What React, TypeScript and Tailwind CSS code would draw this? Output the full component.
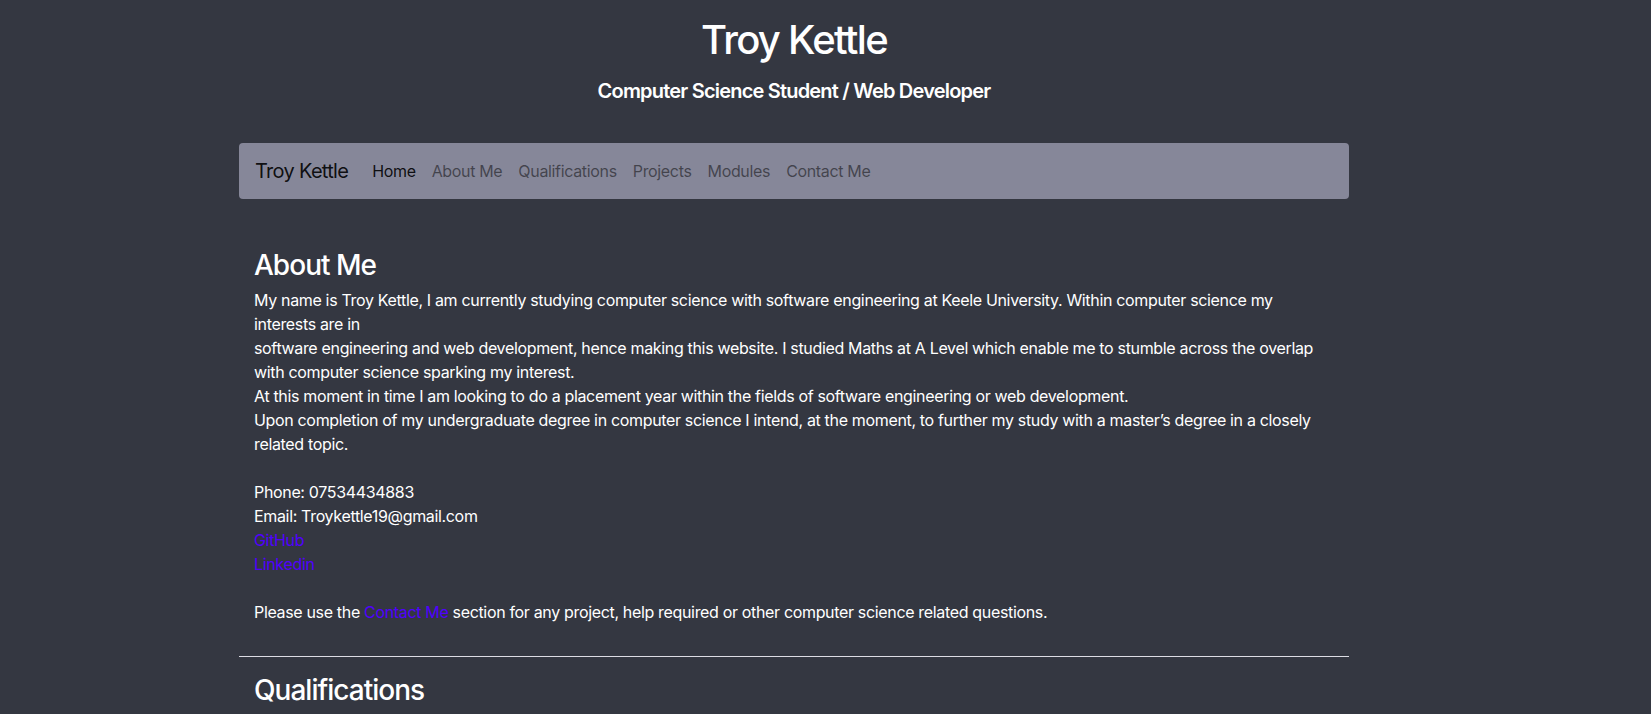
export default function App() {
  const navLinks = ["About Me", "Qualifications", "Projects", "Modules", "Contact Me"];

  return (
    <div className="min-h-screen bg-[#343741] text-white font-['Inter','Noto_Sans',sans-serif] tracking-[-0.021em]">
      <div className="w-[1588px]">
        {/* Header */}
        <header className="text-center pt-4">
          <h1 className="text-[40px] leading-[48px] font-medium tracking-[-0.043em]">Troy Kettle</h1>
          <h5 className="mt-[15px] text-[20px] leading-[24px] font-semibold tracking-[-0.04em]">Computer Science Student / Web Developer</h5>
        </header>

        <div className="w-[1140px] mx-auto px-[15px] mt-10">
          {/* Navbar */}
          <nav className="h-[56px] bg-[#868799] rounded flex items-center px-4">
            <span className="text-[20px] text-black/90 mr-4 tracking-[-0.035em]">Troy Kettle</span>
            <ul className="flex items-center">
              <li className="px-2 text-black/90">Home</li>
              {navLinks.map((l) => (
                <li key={l} className="px-2 text-black/50">{l}</li>
              ))}
            </ul>
          </nav>

          {/* About */}
          <section className="px-[15px] pt-[47px] pb-4">
            <h2 className="text-[28px] leading-[38px] font-medium mb-1 tracking-[-0.035em]">About Me</h2>
            <p className="text-base leading-6 mb-4">
              My name is Troy Kettle, I am currently studying computer science with software engineering at Keele University. Within computer science my interests are in
              <br />
              software engineering and web development, hence making this website. I studied Maths at A Level which enable me to stumble across the overlap with computer science sparking my interest.
              <br />
              At this moment in time I am looking to do a placement year within the fields of software engineering or web development.
              <br />
              Upon completion of my undergraduate degree in computer science I intend, at the moment, to further my study with a master’s degree in a closely related topic.
              <br />
              <br />
              Phone: 07534434883
              <br />
              Email: Troykettle19@gmail.com
              <br />
              <a href="#" className="text-[#5000ff]">GitHub</a>
              <br />
              <a href="#" className="text-[#5000ff]">Linkedin</a>
              <br />
              <br />
              Please use the <a href="#" className="text-[#5000ff]">Contact Me</a> section for any project, help required or other computer science related questions.
            </p>
          </section>

          <hr className="mb-[14px] border-t border-[#dcdce4]" />

          <section className="px-[15px]">
            <h2 className="text-[28px] leading-[38px] font-medium mb-2 tracking-[-0.035em]">Qualifications</h2>
          </section>
        </div>
      </div>
    </div>
  );
}
